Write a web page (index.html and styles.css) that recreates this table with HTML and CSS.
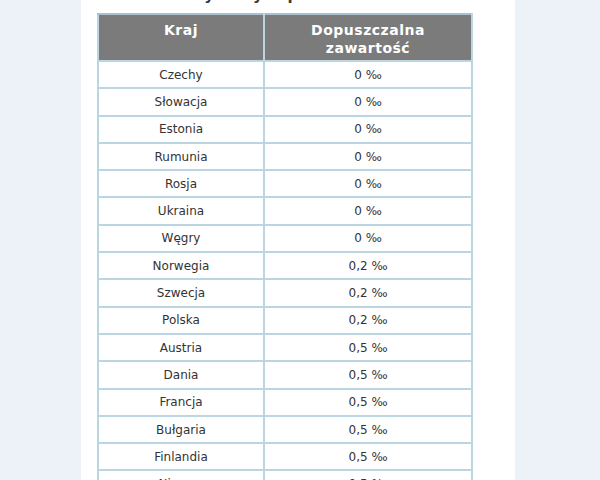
FILE: index.html
```html
<!DOCTYPE html>
<html lang="pl">
<head>
<meta charset="utf-8">
<link rel="stylesheet" href="styles.css">
</head>
<body>
<div class="page">
  <h3 class="title">Dopuszczalna zawartość alkoholu<br>w wybranych państwach</h3>
  <table class="tbl">
    <thead>
      <tr><th class="c1">Kraj</th><th class="c2">Dopuszczalna<br>zawartość</th></tr>
    </thead>
    <tbody>
      <tr><td>Czechy</td><td>0 ‰</td></tr>
      <tr><td>Słowacja</td><td>0 ‰</td></tr>
      <tr><td>Estonia</td><td>0 ‰</td></tr>
      <tr><td>Rumunia</td><td>0 ‰</td></tr>
      <tr><td>Rosja</td><td>0 ‰</td></tr>
      <tr><td>Ukraina</td><td>0 ‰</td></tr>
      <tr><td>Węgry</td><td>0 ‰</td></tr>
      <tr><td>Norwegia</td><td>0,2 ‰</td></tr>
      <tr><td>Szwecja</td><td>0,2 ‰</td></tr>
      <tr><td>Polska</td><td>0,2 ‰</td></tr>
      <tr><td>Austria</td><td>0,5 ‰</td></tr>
      <tr><td>Dania</td><td>0,5 ‰</td></tr>
      <tr><td>Francja</td><td>0,5 ‰</td></tr>
      <tr><td>Bułgaria</td><td>0,5 ‰</td></tr>
      <tr><td>Finlandia</td><td>0,5 ‰</td></tr>
      <tr><td>Niemcy</td><td>0,5 ‰</td></tr>
    </tbody>
  </table>
</div>
</body>
</html>
```
FILE: styles.css
```css
html, body {
  margin: 0;
  padding: 0;
  background: #edf2f9;
  height: 100%;
  overflow: hidden;
}
.page {
  width: 434px;
  margin-left: 81px;
  background: #ffffff;
  min-height: 480px;
  padding-left: 16px;
  box-sizing: border-box;
  overflow: hidden;
}
.title {
  margin: -32px 0 0 0;
  width: 376px;
  font-family: "DejaVu Sans", Verdana, sans-serif;
  font-weight: bold;
  font-size: 15px;
  line-height: 18px;
  color: #3a3a3a;
  text-align: center;
  white-space: nowrap;
  padding-right: 20px;
  box-sizing: border-box;
}
.tbl {
  margin-top: 9px;
  width: 376px;
  border-collapse: collapse;
  font-family: "DejaVu Sans", Tahoma, sans-serif;
}
.tbl th {
  background: #7b7b7b;
  color: #ffffff;
  font-weight: bold;
  font-size: 14px;
  letter-spacing: 0.5px;
  line-height: 18px;
  vertical-align: top;
  padding: 6px 4px 3px;
  border: 2px solid #bcd5e3;
  border-top-color: #a9c0cf;
}
.tbl th.c1 { width: 156px; }
.tbl td {
  border: 2px solid #bcd5e3;
  text-align: center;
  font-size: 12px;
  color: #333;
  height: 25.3px;
  padding: 0;
  line-height: 16px;
}
```
